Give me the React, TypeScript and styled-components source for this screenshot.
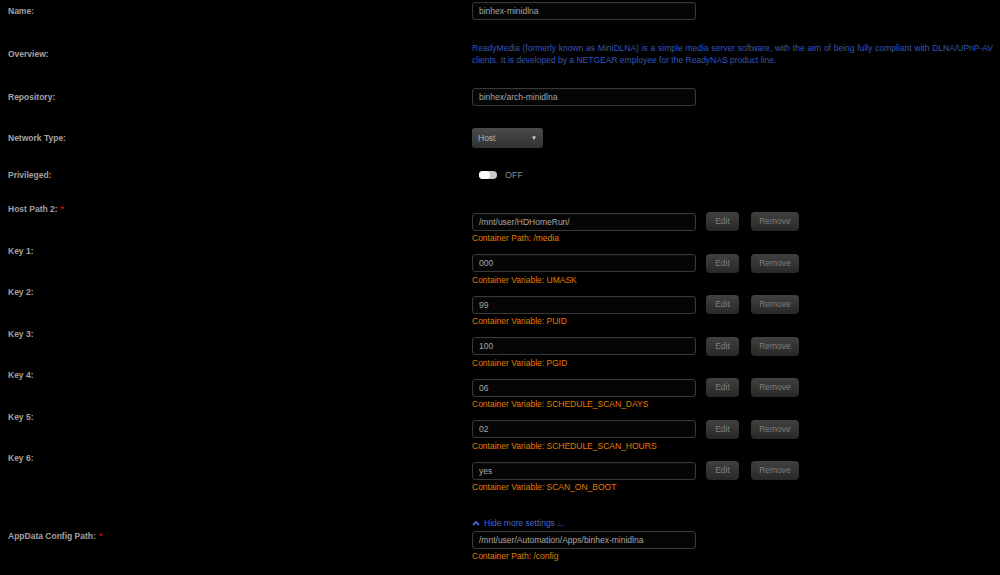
import React from "react";
import styled, { createGlobalStyle } from "styled-components";

const GlobalStyle = createGlobalStyle`
  html, body {
    margin: 0;
    padding: 0;
    background: #000;
  }
  body {
    font-family: "Liberation Sans", Arial, sans-serif;
    width: 1000px;
    height: 575px;
    overflow: hidden;
  }
`;

const Form = styled.div`
  padding: 2px 7px 0 8px;
  display: flex;
  flex-direction: column;
`;

const Row = styled.div<{ $gap?: number }>`
  display: grid;
  grid-template-columns: 464px 1fr;
  align-items: center;
  margin-bottom: ${(p) => p.$gap ?? 22}px;
`;

const ConfigRow = styled.div`
  display: grid;
  grid-template-columns: 464px 1fr;
  align-items: start;
  height: 41.5px;
`;

const LinkRow = styled.div`
  display: grid;
  grid-template-columns: 464px 1fr;
  align-items: start;
  margin-top: 23.5px;
`;

const Label = styled.div<{ $top?: number }>`
  font-size: 8.5px;
  line-height: 12px;
  font-weight: bold;
  color: #a2a2a2;
  margin-top: ${(p) => p.$top ?? 0}px;
`;

const Required = styled.span`
  color: #d40000;
  margin-left: 3px;
`;

const Overview = styled.div`
  font-size: 8.5px;
  line-height: 12px;
  color: #3656b8;
  text-align: justify;
`;

const Field = styled.div<{ $pad?: number }>`
  display: flex;
  flex-direction: column;
  padding-top: ${(p) => p.$pad ?? 0}px;
`;

const Line = styled.div`
  display: flex;
  align-items: center;
`;

const TextInput = styled.div`
  box-sizing: border-box;
  width: 224px;
  height: 18px;
  padding: 0 6px;
  border: 1px solid #383838;
  border-radius: 3px;
  background: #050505;
  box-shadow: inset 0 1px 2px rgba(255, 255, 255, 0.04);
  color: #a5a5a5;
  font-size: 8.5px;
  line-height: 16px;
  white-space: nowrap;
`;

const Button = styled.div<{ $w: number; $ml: number }>`
  box-sizing: border-box;
  width: ${(p) => p.$w}px;
  height: 19px;
  margin-left: ${(p) => p.$ml}px;
  border-radius: 4px;
  background: linear-gradient(#404040, #282828);
  box-shadow: 0 1px 1px rgba(0, 0, 0, 0.6);
  color: #7e7e7e;
  font-size: 8.5px;
  line-height: 19px;
  text-align: center;
`;

const SubText = styled.div`
  margin-top: 2px;
  font-size: 8.5px;
  line-height: 10px;
  color: #e27d00;
`;

const Select = styled.div`
  box-sizing: border-box;
  width: 71px;
  height: 20px;
  padding: 0 6px;
  border-radius: 3px;
  background: linear-gradient(#4a4a4a, #323232);
  display: flex;
  align-items: center;
  justify-content: space-between;
  color: #b5b5b5;
  font-size: 8.5px;
`;

const Caret = styled.span`
  font-size: 6px;
  color: #d8d8d8;
`;

const SwitchWrap = styled.div`
  display: flex;
  align-items: center;
  height: 18px;
  padding-left: 7px;
`;

const Track = styled.div`
  position: relative;
  width: 18px;
  height: 8px;
  border-radius: 4px;
  background: #c9c9c9;
`;

const Knob = styled.div`
  position: absolute;
  left: 0;
  top: 0;
  width: 11px;
  height: 8px;
  border-radius: 4px;
  background: #fff;
`;

const SwitchText = styled.span`
  margin-left: 8px;
  font-size: 9px;
  color: #8a8a8a;
`;

const MoreLink = styled.div`
  display: flex;
  align-items: center;
  gap: 4px;
  height: 12px;
  font-size: 8.5px;
  color: #4766cc;
  margin-bottom: 2px;
`;

type Cfg = { label: string; value: string; sub: string; required?: boolean };

const configs: Cfg[] = [
  { label: "Host Path 2:", value: "/mnt/user/HDHomeRun/", sub: "Container Path: /media", required: true },
  { label: "Key 1:", value: "000", sub: "Container Variable: UMASK" },
  { label: "Key 2:", value: "99", sub: "Container Variable: PUID" },
  { label: "Key 3:", value: "100", sub: "Container Variable: PGID" },
  { label: "Key 4:", value: "06", sub: "Container Variable: SCHEDULE_SCAN_DAYS" },
  { label: "Key 5:", value: "02", sub: "Container Variable: SCHEDULE_SCAN_HOURS" },
  { label: "Key 6:", value: "yes", sub: "Container Variable: SCAN_ON_BOOT" },
];

export default function App() {
  return (
    <>
      <GlobalStyle />
      <Form>
        <Row>
          <Label>Name:</Label>
          <TextInput>binhex-minidlna</TextInput>
        </Row>
        <Row>
          <Label>Overview:</Label>
          <Overview>
            ReadyMedia (formerly known as MiniDLNA) is a simple media server software, with the aim of
            being fully compliant with DLNA/UPnP-AV clients. It is developed by a NETGEAR employee for
            the ReadyNAS product line.
          </Overview>
        </Row>
        <Row>
          <Label>Repository:</Label>
          <TextInput>binhex/arch-minidlna</TextInput>
        </Row>
        <Row $gap={18}>
          <Label>Network Type:</Label>
          <Line>
            <Select>
              <span>Host</span>
              <Caret>▼</Caret>
            </Select>
          </Line>
        </Row>
        <Row $gap={19}>
          <Label>Privileged:</Label>
          <SwitchWrap>
            <Track>
              <Knob />
            </Track>
            <SwitchText>OFF</SwitchText>
          </SwitchWrap>
        </Row>
        {configs.map((c) => (
          <ConfigRow key={c.label}>
            <Label>
              {c.label}
              {c.required && <Required>*</Required>}
            </Label>
            <Field $pad={9}>
              <Line>
                <TextInput>{c.value}</TextInput>
                <Button $w={33} $ml={10}>Edit</Button>
                <Button $w={48} $ml={12}>Remove</Button>
              </Line>
              <SubText>{c.sub}</SubText>
            </Field>
          </ConfigRow>
        ))}
        <LinkRow>
          <Label $top={13}>
            AppData Config Path:<Required>*</Required>
          </Label>
          <Field>
            <MoreLink>
              <svg width="8" height="6" viewBox="0 0 8 6">
                <path d="M1 5 L4 2 L7 5" fill="none" stroke="#4766cc" strokeWidth="1.8" />
              </svg>
              Hide more settings ...
            </MoreLink>
            <TextInput>/mnt/user/Automation/Apps/binhex-minidlna</TextInput>
            <SubText>Container Path: /config</SubText>
          </Field>
        </LinkRow>
      </Form>
    </>
  );
}
